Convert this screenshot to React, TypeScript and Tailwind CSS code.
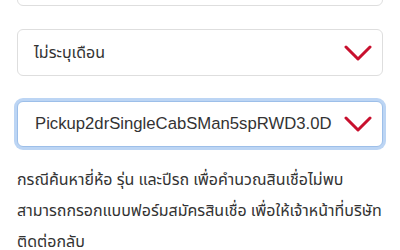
import React from "react";

function Chevron() {
  return (
    <svg width="28" height="18" viewBox="0 0 28 18" className="shrink-0">
      <polyline points="2,3 14,15 26,3" fill="none" stroke="#c8102e" strokeWidth="3" strokeLinecap="round" strokeLinejoin="round" />
    </svg>
  );
}

export default function App() {
  return (
    <div className="w-[400px] h-[250px] overflow-hidden bg-white" style={{ fontFamily: '"Noto Sans Thai", "Liberation Sans", "Noto Sans", sans-serif' }}>
      <div className="px-[17px] flex flex-col">
        <div className="mt-[-41px] h-[47px] rounded-[6px] border border-[#dedede] bg-white" />
        <div className="mt-[23px] h-[47px] rounded-[6px] border border-[#dedede] bg-white flex items-center justify-between pl-[16px] pr-[10px]">
          <span className="text-[16px] text-[#333]">ไม่ระบุเดือน</span>
          <Chevron />
        </div>
        <div className="mt-[25px] h-[46px] rounded-[6px] border border-[#9dbfe9] ring-[3px] ring-[#bcd5f4] bg-white flex items-center justify-between pl-[17px] pr-[10px]">
          <span className="text-[16.7px] text-[#333]" style={{ fontFamily: '"Liberation Sans", Arial, sans-serif' }}>Pickup2drSingleCabSMan5spRWD3.0D</span>
          <Chevron />
        </div>
        <p className="mt-[18px] text-[16px] leading-[31px] text-[#333] whitespace-nowrap">
          กรณีค้นหายี่ห้อ รุ่น และปีรถ เพื่อคำนวณสินเชื่อไม่พบ
          <br />
          สามารถกรอกแบบฟอร์มสมัครสินเชื่อ เพื่อให้เจ้าหน้าที่บริษัท
          <br />
          ติดต่อกลับ
        </p>
      </div>
    </div>
  );
}
